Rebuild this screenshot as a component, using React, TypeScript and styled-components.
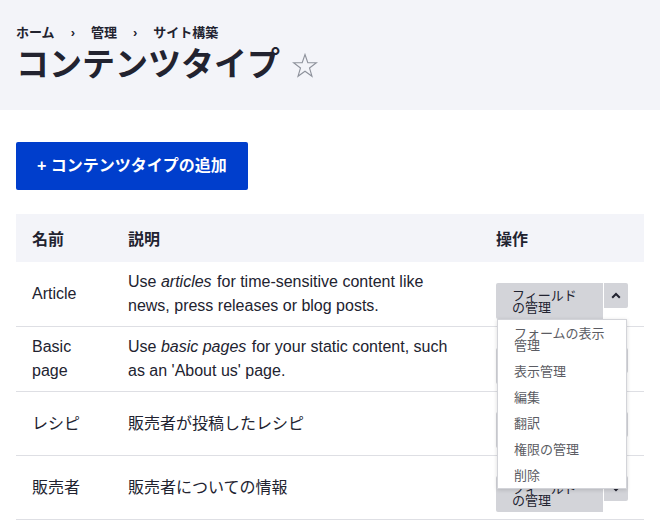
import React from 'react';
import styled, { createGlobalStyle } from 'styled-components';

const Global = createGlobalStyle`
  html, body { margin: 0; padding: 0; background: #fff; }
  body {
    font-family: "Liberation Sans", "Noto Sans CJK JP", sans-serif;
    color: #222330;
  }
`;

const Header = styled.header`
  background: #f3f4f9;
  height: 110px;
  box-sizing: border-box;
  padding: 24px 16px 0;
`;

const Crumbs = styled.ol`
  list-style: none;
  margin: 0;
  padding: 0;
  display: flex;
  font-size: 13px;
  line-height: 18px;
  font-weight: 600;
`;

const Crumb = styled.li`
  & + &::before {
    content: '›';
    padding: 0 16px;
  }
`;

const TitleRow = styled.div`
  display: flex;
  align-items: center;
  gap: 12px;
  margin-top: 1px;
`;

const Title = styled.h1`
  margin: 0;
  font-size: 33px;
  line-height: 44px;
  font-weight: 600;
`;

const StarIcon = styled.svg`
  width: 26px;
  height: 26px;
  margin-top: 2px;
`;

const Main = styled.main`
  padding: 32px 16px 0;
`;

const PrimaryButton = styled.button`
  height: 48px;
  padding: 0 21px;
  background: #003ecc;
  color: #fff;
  border: 0;
  border-radius: 2px;
  font: 700 16px/1 "Liberation Sans", "Noto Sans CJK JP", sans-serif;
  cursor: pointer;
`;

const Table = styled.table`
  width: 100%;
  border-collapse: collapse;
  table-layout: fixed;
  margin-top: 24px;
`;

const Th = styled.th<{ $w?: number }>`
  text-align: left;
  background: #f3f4f9;
  height: 48px;
  padding: 0 16px;
  font-size: 16px;
  font-weight: 700;
  width: ${(p) => (p.$w ? `${p.$w}px` : 'auto')};
  box-sizing: border-box;
`;

const Td = styled.td`
  height: 64px;
  padding: 8px 16px;
  border-bottom: 1px solid #dedfe4;
  font-size: 16px;
  line-height: 24px;
  vertical-align: middle;
  box-sizing: border-box;
`;

const Description = styled.span`
  em {
    font-style: italic;
    padding-right: 1px;
  }
`;

const Drop = styled.div`
  position: relative;
  display: flex;
  align-items: flex-start;
  gap: 1px;
  height: 24px;
  margin-top: 1px;
`;

const DropMain = styled.a`
  flex: 1;
  background: #d3d4d9;
  font-size: 13px;
  line-height: 12px;
  padding: 7px 16px 5px;
  color: #222330;
  border-radius: 2px 0 0 2px;
`;

const Toggle = styled.button`
  width: 24px;
  height: 25px;
  flex: none;
  background: #d3d4d9;
  border: 0;
  border-radius: 0 2px 2px 0;
  padding: 0;
  display: flex;
  align-items: center;
  justify-content: center;
`;

const Menu = styled.ul`
  position: absolute;
  top: 36px;
  left: 1px;
  width: 130px;
  box-sizing: border-box;
  margin: 0;
  padding: 0;
  list-style: none;
  background: #fff;
  border: 1px solid #d3d4d9;
  box-shadow: 0 1px 4px rgba(0, 0, 0, 0.15);
  z-index: 2;
`;

const MenuItem = styled.li`
  padding: 8px 16px 6px;
  font-size: 13px;
  line-height: 12px;
  color: #5b5c63;
`;

const Chevron = ({ up }: { up?: boolean }) => (
  <svg width="10" height="7" viewBox="0 0 10 7">
    <path
      d={up ? 'M1.2 5.8 L5 2 L8.8 5.8' : 'M1.2 1.2 L5 5 L8.8 1.2'}
      fill="none"
      stroke="#222330"
      strokeWidth="2"
    />
  </svg>
);

const menuItems = ['フォームの表示管理', '表示管理', '編集', '翻訳', '権限の管理', '削除'];

const Operations = ({ open }: { open?: boolean }) => (
  <Drop>
    <DropMain>フィールドの管理</DropMain>
    <Toggle>
      <Chevron up={open} />
    </Toggle>
    {open && (
      <Menu>
        {menuItems.map((m) => (
          <MenuItem key={m}>{m}</MenuItem>
        ))}
      </Menu>
    )}
  </Drop>
);

const rows: { name: string; desc: React.ReactNode; open?: boolean }[] = [
  {
    name: 'Article',
    desc: (
      <>
        Use <em>articles</em> for time-sensitive content like news, press releases or blog posts.
      </>
    ),
    open: true,
  },
  {
    name: 'Basic page',
    desc: (
      <>
        Use <em>basic pages</em> for your static content, such as an 'About us' page.
      </>
    ),
  },
  { name: 'レシピ', desc: '販売者が投稿したレシピ' },
  { name: '販売者', desc: '販売者についての情報' },
];

export default function App() {
  return (
    <>
      <Global />
      <Header>
        <Crumbs>
          <Crumb>ホーム</Crumb>
          <Crumb>管理</Crumb>
          <Crumb>サイト構築</Crumb>
        </Crumbs>
        <TitleRow>
          <Title>コンテンツタイプ</Title>
          <StarIcon viewBox="0 0 26 26">
            <path
              d="M13 1.5 L15.8 9.7 L24.4 9.8 L17.5 15 L20 23.3 L13 18.3 L6 23.3 L8.5 15 L1.6 9.8 L10.2 9.7 Z"
              fill="none"
              stroke="#8e929c"
              strokeWidth="1.1"
              strokeLinejoin="miter"
            />
          </StarIcon>
        </TitleRow>
      </Header>
      <Main>
        <PrimaryButton>+ コンテンツタイプの追加</PrimaryButton>
        <Table>
          <thead>
            <tr>
              <Th $w={96}>名前</Th>
              <Th>説明</Th>
              <Th $w={164}>操作</Th>
            </tr>
          </thead>
          <tbody>
            {rows.map((r) => (
              <tr key={r.name}>
                <Td>{r.name}</Td>
                <Td>
                  <Description>{r.desc}</Description>
                </Td>
                <Td>
                  <Operations open={r.open} />
                </Td>
              </tr>
            ))}
          </tbody>
        </Table>
      </Main>
    </>
  );
}
